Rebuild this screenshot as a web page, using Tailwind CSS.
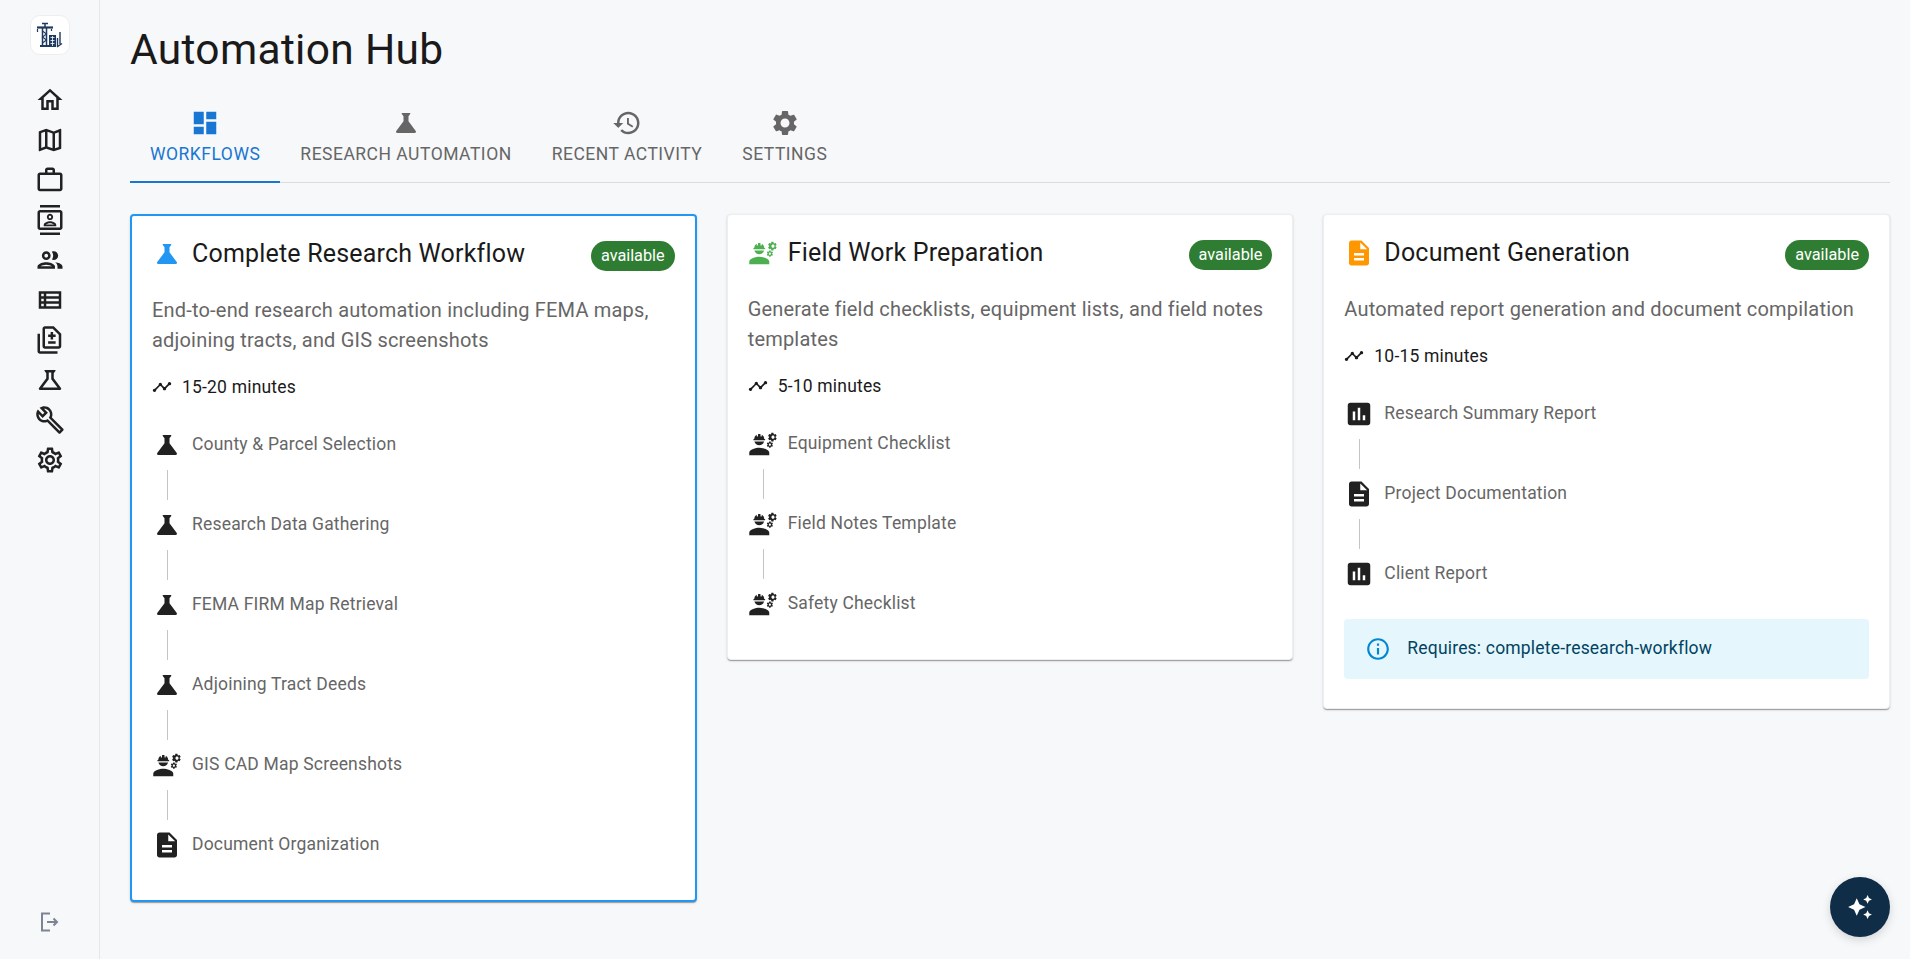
<!DOCTYPE html>
<html lang="en">
<head>
    <meta charset="UTF-8">
    <meta name="viewport" content="width=device-width, initial-scale=1.0">
    <title>Automation Hub</title>
    <script src="https://cdn.jsdelivr.net/npm/@tailwindcss/browser@4"></script>
</head>
<body class="bg-[#f7f8fa] [font-family:Roboto,sans-serif]">
    <!-- Icon sprite -->
    <svg class="absolute w-0 h-0" aria-hidden="true">
        <defs>
            <symbol id="i-home" viewBox="0 0 24 24"><path d="m12 5.69 5 4.5V18h-2v-6H9v6H7v-7.81zM12 3 2 12h3v8h6v-6h2v6h6v-8h3z"/></symbol>
            <symbol id="i-map" viewBox="0 0 24 24"><path d="m20.5 3-.16.03L15 5.1 9 3 3.36 4.9c-.21.07-.36.25-.36.48V20.5c0 .28.22.5.5.5l.16-.03L9 18.9l6 2.1 5.64-1.9c.21-.07.36-.25.36-.48V3.5c0-.28-.22-.5-.5-.5M10 5.47l4 1.4v11.66l-4-1.4zm-5 .99 3-1.01v11.7l-3 1.16zm14 11.08-3 1.01V6.86l3-1.16z"/></symbol>
            <symbol id="i-work" viewBox="0 0 24 24"><path d="M14 6V4h-4v2zM4 8v11h16V8zm16-2c1.11 0 2 .89 2 2v11c0 1.11-.89 2-2 2H4c-1.11 0-2-.89-2-2l.01-11c0-1.11.88-2 1.99-2h4V4c0-1.11.89-2 2-2h4c1.11 0 2 .89 2 2v2z"/></symbol>
            <symbol id="i-contacts" viewBox="0 0 24 24"><path d="M20 0H4v2h16zM4 24h16v-2H4zM20 4H4c-1.1 0-2 .9-2 2v12c0 1.1.9 2 2 2h16c1.1 0 2-.9 2-2V6c0-1.1-.9-2-2-2m0 14H4V6h16zm-8-6c1.38 0 2.5-1.12 2.5-2.5S13.38 7 12 7 9.5 8.12 9.5 9.5 10.62 12 12 12m0-3.5c.55 0 1 .45 1 1s-.45 1-1 1-1-.45-1-1 .45-1 1-1m5 7.49C17 13.9 13.69 13 12 13s-5 .9-5 2.99V17h10zm-8.19-.49c.61-.52 2.03-1 3.19-1 1.17 0 2.59.48 3.2 1z"/></symbol>
            <symbol id="i-people" viewBox="0 0 24 24"><path d="M9 13.75c-2.34 0-7 1.17-7 3.5V19h14v-1.75c0-2.33-4.66-3.5-7-3.5zM4.34 17c.84-.58 2.87-1.25 4.66-1.25s3.82.67 4.66 1.25H4.34zM9 12c1.93 0 3.5-1.57 3.5-3.5S10.93 5 9 5 5.5 6.57 5.5 8.5 7.07 12 9 12zm0-5c.83 0 1.5.67 1.5 1.5S9.83 10 9 10s-1.5-.67-1.5-1.5S8.17 7 9 7zm7.04 6.81c1.16.84 1.96 1.96 1.96 3.44V19h4v-1.75c0-2.02-3.5-3.17-5.96-3.44zM15 12c1.93 0 3.5-1.57 3.5-3.5S16.93 5 15 5c-.54 0-1.04.13-1.5.35.63.89 1 1.98 1 3.15s-.37 2.26-1 3.15c.46.22.96.35 1.5.35z"/></symbol>
            <symbol id="i-list" viewBox="0 0 24 24"><path d="M3 5v14h18V5H3zm4 2v2H5V7h2zm-2 6v-2h2v2H5zm0 2h2v2H5v-2zm14 2H9v-2h10v2zm0-4H9v-2h10v2zm0-4H9V7h10v2z"/></symbol>
            <symbol id="i-difference" viewBox="0 0 24 24"><path d="M18 23H4c-1.1 0-2-.9-2-2V7h2v14h14v2zM15 1H8c-1.1 0-1.99.9-1.99 2L6 17c0 1.1.89 2 1.99 2H19c1.1 0 2-.9 2-2V7l-6-6zm4 16H8V3h6.17L19 7.83V17z"/><path d="M12.5 5.5h2v2h2v2h-2v2h-2v-2h-2v-2h2zM10.500 13h6v2h-6z"/></symbol>
            <symbol id="i-science-line" viewBox="0 0 24 24"><path d="M13 11.33 18 18H6l5-6.67V6h2m2.96-2H8.04c-.42 0-.65.48-.39.81L9 6.5v4.17L3.2 18.4c-.49.66-.02 1.6.8 1.6h16c.82 0 1.29-.94.8-1.6L15 10.67V6.5l1.35-1.69c.26-.33.03-.81-.39-.81"/></symbol>
            <symbol id="i-build" viewBox="0 0 24 24"><path d="m22.61 18.99-9.08-9.08c.93-2.34.45-5.1-1.44-7C9.79.61 6.21.4 3.66 2.26L7.5 6.11 6.08 7.52 2.25 3.69C.39 6.23.6 9.82 2.9 12.11c1.86 1.86 4.57 2.35 6.89 1.48l9.11 9.11c.39.39 1.02.39 1.41 0l2.3-2.3c.4-.38.4-1.01 0-1.41m-3 1.6-9.46-9.46c-.61.45-1.29.72-2 .82-1.36.2-2.79-.21-3.83-1.25C3.37 9.76 2.93 8.5 3 7.26l3.09 3.09 4.24-4.24-3.09-3.09c1.24-.07 2.49.37 3.44 1.31 1.08 1.08 1.49 2.57 1.24 3.96-.12.71-.42 1.37-.88 1.96l9.45 9.45z"/></symbol>
            <symbol id="i-settings-line" viewBox="0 0 24 24"><path d="M19.43 12.98c.04-.32.07-.64.07-.98 0-.34-.03-.66-.07-.98l2.11-1.65c.19-.15.24-.42.12-.64l-2-3.46c-.09-.16-.26-.25-.44-.25-.06 0-.12.01-.17.03l-2.49 1c-.52-.4-1.08-.73-1.69-.98l-.38-2.65C14.46 2.18 14.25 2 14 2h-4c-.25 0-.46.18-.49.42l-.38 2.65c-.61.25-1.17.59-1.69.98l-2.49-1c-.06-.02-.12-.03-.18-.03-.17 0-.34.09-.43.25l-2 3.46c-.13.22-.07.49.12.64l2.11 1.65c-.04.32-.07.65-.07.98 0 .33.03.66.07.98l-2.11 1.65c-.19.15-.24.42-.12.64l2 3.46c.09.16.26.25.44.25.06 0 .12-.01.17-.03l2.49-1c.52.4 1.08.73 1.69.98l.38 2.65c.03.24.24.42.49.42h4c.25 0 .46-.18.49-.42l.38-2.65c.61-.25 1.17-.59 1.69-.98l2.49 1c.06.02.12.03.18.03.17 0 .34-.09.43-.25l2-3.46c.12-.22.07-.49-.12-.64zm-1.98-1.71c.04.31.05.52.05.73 0 .21-.02.43-.05.73l-.14 1.13.89.7 1.08.84-.7 1.21-1.27-.51-1.04-.42-.9.68c-.43.32-.84.56-1.25.73l-1.06.43-.16 1.13-.2 1.35h-1.4l-.19-1.35-.16-1.13-1.06-.43c-.43-.18-.83-.41-1.23-.71l-.91-.7-1.06.43-1.27.51-.7-1.21 1.08-.84.89-.7-.14-1.13c-.03-.31-.05-.54-.05-.74s.02-.43.05-.73l.14-1.13-.89-.7-1.08-.84.7-1.21 1.27.51 1.04.42.9-.68c.43-.32.84-.56 1.25-.73l1.06-.43.16-1.13.2-1.35h1.39l.19 1.35.16 1.13 1.06.43c.43.18.83.41 1.23.71l.91.7 1.06-.43 1.27-.51.7 1.21-1.07.85-.89.7zM12 8c-2.21 0-4 1.79-4 4s1.79 4 4 4 4-1.79 4-4-1.79-4-4-4m0 6c-1.1 0-2-.9-2-2s.9-2 2-2 2 .9 2 2-.9 2-2 2"/></symbol>
            <symbol id="i-settings" viewBox="0 0 24 24"><path d="M19.14 12.94c.04-.3.06-.61.06-.94 0-.32-.02-.64-.07-.94l2.03-1.58c.18-.14.23-.41.12-.61l-1.92-3.32c-.12-.22-.37-.29-.59-.22l-2.39.96c-.5-.38-1.03-.7-1.62-.94l-.36-2.54c-.04-.24-.24-.41-.48-.41h-3.84c-.24 0-.43.17-.47.41l-.36 2.54c-.59.24-1.13.57-1.62.94l-2.39-.96c-.22-.08-.47 0-.59.22L2.74 8.87c-.12.21-.08.47.12.61l2.03 1.58c-.05.3-.09.63-.09.94s.02.64.07.94l-2.03 1.58c-.18.14-.23.41-.12.61l1.92 3.32c.12.22.37.29.59.22l2.39-.96c.5.38 1.03.7 1.62.94l.36 2.54c.05.24.24.41.48.41h3.84c.24 0 .44-.17.47-.41l.36-2.54c.59-.24 1.13-.56 1.62-.94l2.39.96c.22.08.47 0 .59-.22l1.92-3.32c.12-.22.07-.47-.12-.61l-2.01-1.58zM12 15.6c-1.98 0-3.6-1.62-3.6-3.6s1.62-3.6 3.6-3.6 3.6 1.62 3.6 3.6-1.62 3.6-3.6 3.6z"/></symbol>
            <symbol id="i-dashboard" viewBox="0 0 24 24"><path d="M3 13h8V3H3zm0 8h8v-6H3zm10 0h8V11h-8zm0-18v6h8V3z"/></symbol>
            <symbol id="i-science" viewBox="0 0 24 24"><path d="M19.8 18.4 14 10.67V6.5l1.35-1.69c.26-.33.03-.81-.39-.81H9.04c-.42 0-.65.48-.39.81L10 6.5v4.17L4.2 18.4c-.49.66-.02 1.6.8 1.6h14c.82 0 1.29-.94.8-1.6"/></symbol>
            <symbol id="i-history" viewBox="0 0 24 24"><path d="M13 3c-4.97 0-9 4.03-9 9H1l3.89 3.89.07.14L9 12H6c0-3.87 3.13-7 7-7s7 3.13 7 7-3.13 7-7 7c-1.93 0-3.68-.79-4.94-2.06l-1.42 1.42C8.27 19.99 10.51 21 13 21c4.97 0 9-4.03 9-9s-4.03-9-9-9zm-1 5v5l4.28 2.54.72-1.21-3.5-2.08V8H12z"/></symbol>
            <symbol id="i-doc" viewBox="0 0 24 24"><path d="M14 2H6c-1.1 0-1.99.9-1.99 2L4 20c0 1.1.89 2 1.99 2H18c1.1 0 2-.9 2-2V8zm2 16H8v-2h8zm0-4H8v-2h8zm-3-5V3.5L18.5 9z"/></symbol>
            <symbol id="i-engineering" viewBox="0 0 24 24"><path d="M9 15c-2.67 0-8 1.34-8 4v2h16v-2c0-2.66-5.33-4-8-4z"/><path d="M22.1 6.84c.01-.11.02-.22.02-.34 0-.12-.01-.23-.03-.34l.74-.58c.07-.05.08-.15.04-.22l-.7-1.21c-.04-.08-.14-.1-.21-.08l-.86.35c-.18-.14-.38-.25-.59-.34l-.13-.93c-.01-.08-.08-.15-.17-.15h-1.4c-.09 0-.16.06-.17.15l-.13.93c-.21.09-.41.21-.59.34l-.87-.35c-.08-.03-.17 0-.21.08l-.7 1.21c-.04.08-.03.17.04.22l.74.58c-.02.11-.03.23-.03.34 0 .11.01.23.03.34l-.74.58c-.07.05-.08.15-.04.22l.7 1.21c.04.08.14.1.21.08l.87-.35c.18.14.38.25.59.34l.13.93c.01.09.08.15.17.15h1.4c.09 0 .16-.06.17-.15l.13-.93c.21-.09.41-.21.59-.34l.87.35c.08.03.17 0 .21-.08l.7-1.21c.04-.08.03-.17-.04-.22l-.73-.58zM20 7.75c-.69 0-1.25-.56-1.25-1.25s.56-1.25 1.25-1.25 1.25.56 1.25 1.25-.56 1.25-1.25 1.25z"/><path d="M19.92 11.68l-.5-.87c-.03-.06-.1-.08-.15-.06l-.62.25c-.13-.1-.27-.18-.42-.24l-.09-.66c-.02-.06-.08-.1-.14-.1h-1c-.06 0-.11.04-.12.11l-.09.66c-.15.06-.29.15-.42.24l-.62-.25c-.06-.02-.12 0-.15.06l-.5.87c-.03.06-.02.12.03.16l.53.41c-.01.08-.02.16-.02.24 0 .08.01.17.02.24l-.53.41c-.05.04-.06.11-.03.16l.5.87c.03.06.1.08.15.06l.62-.25c.13.1.27.18.42.24l.09.66c.01.07.06.11.12.11h1c.06 0 .12-.04.12-.11l.09-.66c.15-.06.29-.15.42-.24l.62.25c.06.02.12 0 .15-.06l.5-.87c.03-.06.02-.12-.03-.16l-.52-.41c.01-.08.02-.16.02-.24 0-.08-.01-.17-.02-.24l.53-.41c.05-.04.06-.11.04-.17zm-2.42 1.65c-.46 0-.83-.38-.83-.83 0-.46.38-.83.83-.83s.83.38.83.83c0 .46-.37.83-.83.83z"/><path d="M4.74 9h8.53c.27 0 .49-.22.49-.49v-.02c0-.27-.22-.49-.49-.49H13c0-1.48-.81-2.75-2-3.45v.95c0 .28-.22.5-.5.5s-.5-.22-.5-.5V4.14C9.68 4.06 9.35 4 9 4s-.68.06-1 .14V5.5c0 .28-.22.5-.5.5S7 5.78 7 5.5v-.95C5.81 5.25 5 6.52 5 8h-.26c-.27 0-.49.22-.49.49v.03c0 .26.22.48.49.48z"/><path d="M9 13c1.86 0 3.41-1.28 3.86-3H5.14c.45 1.72 2 3 3.86 3z"/></symbol>
            <symbol id="i-timeline" viewBox="0 0 24 24"><path d="M23 8c0 1.1-.9 2-2 2-.18 0-.35-.02-.51-.07l-3.56 3.55c.05.16.07.34.07.52 0 1.1-.9 2-2 2s-2-.9-2-2c0-.18.02-.36.07-.52l-2.55-2.55c-.16.05-.34.07-.52.07s-.36-.02-.52-.07l-4.55 4.56c.05.16.07.33.07.51 0 1.1-.9 2-2 2s-2-.9-2-2 .9-2 2-2c.18 0 .35.02.51.07l4.56-4.55C8.02 9.36 8 9.18 8 9c0-1.1.9-2 2-2s2 .9 2 2c0 .18-.02.36-.07.52l2.55 2.55c.16-.05.34-.07.52-.07s.36.02.52.07l3.55-3.56C19.02 8.35 19 8.18 19 8c0-1.1.9-2 2-2s2 .9 2 2z"/></symbol>
            <symbol id="i-assessment" viewBox="0 0 24 24"><path d="M19 3H5c-1.1 0-2 .9-2 2v14c0 1.1.9 2 2 2h14c1.1 0 2-.9 2-2V5c0-1.1-.9-2-2-2zM9 17H7v-7h2v7zm4 0h-2V7h2v10zm4 0h-2v-4h2v4z"/></symbol>
            <symbol id="i-info" viewBox="0 0 24 24"><path d="M11 7h2v2h-2zm0 4h2v6h-2zm1-9C6.48 2 2 6.48 2 12s4.48 10 10 10 10-4.48 10-10S17.52 2 12 2zm0 18c-4.41 0-8-3.59-8-8s3.59-8 8-8 8 3.59 8 8-3.59 8-8 8z"/></symbol>
            <symbol id="i-sparkle" viewBox="0 0 24 24"><path d="M19 9l1.25-2.75L23 5l-2.75-1.25L19 1l-1.25 2.75L15 5l2.75 1.25L19 9zm-7.5.5L9 4 6.5 9.5 1 12l5.5 2.5L9 20l2.5-5.5L17 12l-5.5-2.5zM19 15l-1.25 2.75L15 19l2.75 1.25L19 23l1.25-2.75L23 19l-2.75-1.25L19 15z"/></symbol>
        </defs>
    </svg>

    <div class="flex h-screen overflow-hidden">
        <!-- Sidebar -->
        <aside class="w-[100px] shrink-0 border-r border-[#e5e7eb] flex flex-col items-center pt-[15px] pb-[27px] text-[#212121]">
            <div class="w-10 h-10 bg-white border border-[#eceef1] rounded-[10px] flex items-center justify-center">
                <svg class="w-[28px] h-[28px] text-[#1f3a5f]" viewBox="0 0 28 28" fill="none" stroke="currentColor">
                    <path d="M1 6.500h16" stroke-width="2.200"/>
                    <path d="M6 2.500h6M9 2v4" stroke-width="1.500"/>
                    <path d="M1.500 8v3M15.500 8v2" stroke-width="1.200"/>
                    <path d="M6.500 7v17M10.500 7v17" stroke-width="1.500"/>
                    <path d="M6.500 10l4 3-4 3 4 3-4 3" stroke-width="1.100"/>
                    <path d="M4 25h9" stroke-width="2"/>
                    <path d="M13 14h7v12h-7z" fill="currentColor" stroke="none"/>
                    <path d="M14.500 16.500h4M14.500 19.500h4M14.500 22.500h4M16.500 15v10" stroke="#fff" stroke-width=".8"/>
                    <path d="M21.500 26v-9M24 11v12M21 26l5-3.500" stroke-width="1.400"/>
                </svg>
            </div>
            <nav class="mt-[30px] flex flex-col gap-[10px]">
                <svg class="w-[30px] h-[30px] fill-current"><use href="#i-home"/></svg>
                <svg class="w-[30px] h-[30px] fill-current"><use href="#i-map"/></svg>
                <svg class="w-[30px] h-[30px] fill-current"><use href="#i-work"/></svg>
                <svg class="w-[30px] h-[30px] fill-current"><use href="#i-contacts"/></svg>
                <svg class="w-[30px] h-[30px] fill-current"><use href="#i-people"/></svg>
                <svg class="w-[30px] h-[30px] fill-current"><use href="#i-list"/></svg>
                <svg class="w-[30px] h-[30px] fill-current"><use href="#i-difference"/></svg>
                <svg class="w-[30px] h-[30px] fill-current"><use href="#i-science-line"/></svg>
                <svg class="w-[30px] h-[30px] fill-current"><use href="#i-build"/></svg>
                <svg class="w-[30px] h-[30px] fill-current"><use href="#i-settings-line"/></svg>
            </nav>
            <svg class="mt-auto w-5 h-5 text-[#7d8590]" viewBox="0 0 20 20" fill="none" stroke="currentColor" stroke-width="2">
                <path d="M10 1.500H2V18.500H10M7 10h10M13.500 6.500 17 10l-3.500 3.500"/>
            </svg>
        </aside>

        <!-- Main -->
        <main class="flex-1 min-w-0 pl-[30px] pr-5 pt-[26px]">
            <h1 class="text-[42.5px] leading-[48px] tracking-[0.31px] text-[#1a1a1a]">Automation Hub</h1>

            <!-- Tabs -->
            <div class="mt-[36px] flex border-b border-[#d9dce1] h-[73px]">
                <div class="relative px-5 flex flex-col items-center text-[#1976d2]">
                    <svg class="w-[30px] h-[30px] fill-current mt-[-2px]"><use href="#i-dashboard"/></svg>
                    <span class="mt-1 text-[17.5px] tracking-[0.5px] leading-6">WORKFLOWS</span>
                    <div class="absolute left-0 right-0 bottom-[-1px] h-0.5 bg-[#1976d2]"></div>
                </div>
                <div class="px-5 flex flex-col items-center text-[#666666]">
                    <svg class="w-[30px] h-[30px] fill-current mt-[-2px]"><use href="#i-science"/></svg>
                    <span class="mt-1 text-[17.5px] tracking-[0.5px] leading-6">RESEARCH AUTOMATION</span>
                </div>
                <div class="px-5 flex flex-col items-center text-[#666666]">
                    <svg class="w-[30px] h-[30px] fill-current mt-[-2px]"><use href="#i-history"/></svg>
                    <span class="mt-1 text-[17.5px] tracking-[0.5px] leading-6">RECENT ACTIVITY</span>
                </div>
                <div class="px-5 flex flex-col items-center text-[#666666]">
                    <svg class="w-[30px] h-[30px] fill-current mt-[-2px]"><use href="#i-settings"/></svg>
                    <span class="mt-1 text-[17.5px] tracking-[0.5px] leading-6">SETTINGS</span>
                </div>
            </div>

            <!-- Workflow cards -->
            <div class="mt-[31px] grid grid-cols-3 gap-[30px] items-start">
                <!-- Complete Research Workflow -->
                <div class="bg-white rounded border-2 border-[#2196f3] px-5 pt-5 pb-[30px] shadow-[0_2px_1px_-1px_rgba(0,0,0,0.2),0_1px_1px_rgba(0,0,0,0.14),0_1px_3px_rgba(0,0,0,0.12)]">
                    <div class="flex items-center h-9">
                        <svg class="w-[30px] h-[30px] fill-[#2196f3] shrink-0"><use href="#i-science"/></svg>
                        <h2 class="ml-2.5 text-[25px] tracking-[0.19px] text-[#1a1a1a] flex-1">Complete Research Workflow</h2>
                        <span class="h-[30px] mt-1 px-2.5 rounded-full bg-[#2e7d32] text-white text-[16.25px] leading-[30px]">available</span>
                    </div>
                    <p class="mt-[23px] text-[20px] tracking-[0.19px] leading-[30px] text-[#666666]">End-to-end research automation including FEMA maps, adjoining tracts, and GIS screenshots</p>
                    <div class="mt-[20px] flex items-center h-6 text-[17.5px] tracking-[0.19px] text-[#1a1a1a]">
                        <svg class="w-5 h-5 fill-current mr-2.5"><use href="#i-timeline"/></svg>15-20 minutes
                    </div>
                    <div class="mt-[21px]">
                        <div class="flex items-center h-[50px] text-[17.5px] tracking-[0.19px] text-[#666666]"><svg class="w-[30px] h-[30px] fill-[#212121] mr-2.5"><use href="#i-science"/></svg><span class="mb-0.5">County &amp; Parcel Selection</span></div>
                        <div class="ml-[15px] w-px h-[30px] bg-[#c4c4c4]"></div>
                        <div class="flex items-center h-[50px] text-[17.5px] tracking-[0.19px] text-[#666666]"><svg class="w-[30px] h-[30px] fill-[#212121] mr-2.5"><use href="#i-science"/></svg><span class="mb-0.5">Research Data Gathering</span></div>
                        <div class="ml-[15px] w-px h-[30px] bg-[#c4c4c4]"></div>
                        <div class="flex items-center h-[50px] text-[17.5px] tracking-[0.19px] text-[#666666]"><svg class="w-[30px] h-[30px] fill-[#212121] mr-2.5"><use href="#i-science"/></svg><span class="mb-0.5">FEMA FIRM Map Retrieval</span></div>
                        <div class="ml-[15px] w-px h-[30px] bg-[#c4c4c4]"></div>
                        <div class="flex items-center h-[50px] text-[17.5px] tracking-[0.19px] text-[#666666]"><svg class="w-[30px] h-[30px] fill-[#212121] mr-2.5"><use href="#i-science"/></svg><span class="mb-0.5">Adjoining Tract Deeds</span></div>
                        <div class="ml-[15px] w-px h-[30px] bg-[#c4c4c4]"></div>
                        <div class="flex items-center h-[50px] text-[17.5px] tracking-[0.19px] text-[#666666]"><svg class="w-[30px] h-[30px] fill-[#212121] mr-2.5"><use href="#i-engineering"/></svg><span class="mb-0.5">GIS CAD Map Screenshots</span></div>
                        <div class="ml-[15px] w-px h-[30px] bg-[#c4c4c4]"></div>
                        <div class="flex items-center h-[50px] text-[17.5px] tracking-[0.19px] text-[#666666]"><svg class="w-[30px] h-[30px] fill-[#212121] mr-2.5"><use href="#i-doc"/></svg><span class="mb-0.5">Document Organization</span></div>
                    </div>
                </div>

                <!-- Field Work Preparation -->
                <div class="bg-white rounded border border-[#eceef1] px-5 pt-5 pb-[30px] shadow-[0_2px_1px_-1px_rgba(0,0,0,0.2),0_1px_1px_rgba(0,0,0,0.14),0_1px_3px_rgba(0,0,0,0.12)]">
                    <div class="flex items-center h-9">
                        <svg class="w-[30px] h-[30px] fill-[#4caf50] shrink-0"><use href="#i-engineering"/></svg>
                        <h2 class="ml-2.5 text-[25px] tracking-[0.19px] text-[#1a1a1a] flex-1">Field Work Preparation</h2>
                        <span class="h-[30px] mt-1 px-2.5 rounded-full bg-[#2e7d32] text-white text-[16.25px] leading-[30px]">available</span>
                    </div>
                    <p class="mt-[23px] text-[20px] tracking-[0.19px] leading-[30px] text-[#666666]">Generate field checklists, equipment lists, and field notes templates</p>
                    <div class="mt-[20px] flex items-center h-6 text-[17.5px] tracking-[0.19px] text-[#1a1a1a]">
                        <svg class="w-5 h-5 fill-current mr-2.5"><use href="#i-timeline"/></svg>5-10 minutes
                    </div>
                    <div class="mt-[21px]">
                        <div class="flex items-center h-[50px] text-[17.5px] tracking-[0.19px] text-[#666666]"><svg class="w-[30px] h-[30px] fill-[#212121] mr-2.5"><use href="#i-engineering"/></svg><span class="mb-0.5">Equipment Checklist</span></div>
                        <div class="ml-[15px] w-px h-[30px] bg-[#c4c4c4]"></div>
                        <div class="flex items-center h-[50px] text-[17.5px] tracking-[0.19px] text-[#666666]"><svg class="w-[30px] h-[30px] fill-[#212121] mr-2.5"><use href="#i-engineering"/></svg><span class="mb-0.5">Field Notes Template</span></div>
                        <div class="ml-[15px] w-px h-[30px] bg-[#c4c4c4]"></div>
                        <div class="flex items-center h-[50px] text-[17.5px] tracking-[0.19px] text-[#666666]"><svg class="w-[30px] h-[30px] fill-[#212121] mr-2.5"><use href="#i-engineering"/></svg><span class="mb-0.5">Safety Checklist</span></div>
                    </div>
                </div>

                <!-- Document Generation -->
                <div class="bg-white rounded border border-[#eceef1] px-5 pt-5 pb-[29px] shadow-[0_2px_1px_-1px_rgba(0,0,0,0.2),0_1px_1px_rgba(0,0,0,0.14),0_1px_3px_rgba(0,0,0,0.12)]">
                    <div class="flex items-center h-9">
                        <svg class="w-[30px] h-[30px] fill-[#ff9800] shrink-0"><use href="#i-doc"/></svg>
                        <h2 class="ml-2.5 text-[25px] tracking-[0.19px] text-[#1a1a1a] flex-1">Document Generation</h2>
                        <span class="h-[30px] mt-1 px-2.5 rounded-full bg-[#2e7d32] text-white text-[16.25px] leading-[30px]">available</span>
                    </div>
                    <p class="mt-[23px] text-[20px] tracking-[0.19px] leading-[30px] text-[#666666]">Automated report generation and document compilation</p>
                    <div class="mt-[20px] flex items-center h-6 text-[17.5px] tracking-[0.19px] text-[#1a1a1a]">
                        <svg class="w-5 h-5 fill-current mr-2.5"><use href="#i-timeline"/></svg>10-15 minutes
                    </div>
                    <div class="mt-[21px]">
                        <div class="flex items-center h-[50px] text-[17.5px] tracking-[0.19px] text-[#666666]"><svg class="w-[30px] h-[30px] fill-[#212121] mr-2.5"><use href="#i-assessment"/></svg><span class="mb-0.5">Research Summary Report</span></div>
                        <div class="ml-[15px] w-px h-[30px] bg-[#c4c4c4]"></div>
                        <div class="flex items-center h-[50px] text-[17.5px] tracking-[0.19px] text-[#666666]"><svg class="w-[30px] h-[30px] fill-[#212121] mr-2.5"><use href="#i-doc"/></svg><span class="mb-0.5">Project Documentation</span></div>
                        <div class="ml-[15px] w-px h-[30px] bg-[#c4c4c4]"></div>
                        <div class="flex items-center h-[50px] text-[17.5px] tracking-[0.19px] text-[#666666]"><svg class="w-[30px] h-[30px] fill-[#212121] mr-2.5"><use href="#i-assessment"/></svg><span class="mb-0.5">Client Report</span></div>
                    </div>
                    <div class="mt-5 h-[60px] rounded bg-[#e5f6fd] flex items-center pl-[21px] text-[17.5px] tracking-[0.19px] text-[#014361]">
                        <svg class="w-[26px] h-[26px] fill-[#0288d1] mr-4"><use href="#i-info"/></svg><span class="mb-0.5">Requires: complete-research-workflow</span>
                    </div>
                </div>
            </div>
        </main>
    </div>

    <!-- Assistant button -->
    <button class="fixed right-5 bottom-[22px] w-[60px] h-[60px] rounded-full bg-[#0f2d47] flex items-center justify-center shadow-[0_3px_10px_rgba(0,0,0,0.15)]">
        <svg class="w-[26px] h-[26px] fill-white"><use href="#i-sparkle"/></svg>
    </button>
</body>
</html>
